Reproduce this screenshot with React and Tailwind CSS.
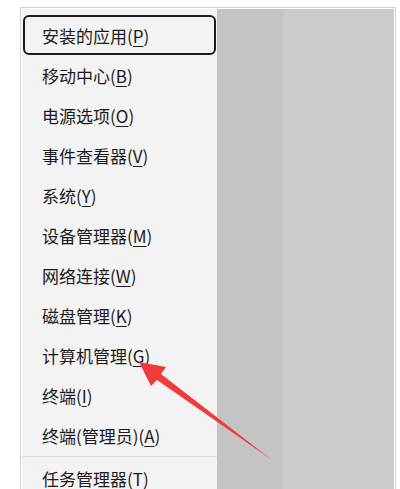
import React from "react";

const items = [
  { label: "安装的应用", key: "P", selected: true },
  { label: "移动中心", key: "B" },
  { label: "电源选项", key: "O" },
  { label: "事件查看器", key: "V" },
  { label: "系统", key: "Y" },
  { label: "设备管理器", key: "M" },
  { label: "网络连接", key: "W" },
  { label: "磁盘管理", key: "K" },
  { label: "计算机管理", key: "G" },
  { label: "终端", key: "I" },
  { label: "终端(管理员)", key: "A" },
];

const MenuItem = ({ label, hotkey, selected }) => (
  <div
    className={`mx-[1px] h-[40px] flex items-center pl-[17px] border-2 rounded-[6px] ${
      selected ? "border-[#1c1c1c]" : "border-transparent"
    }`}
  >
    <span className="text-[17px] text-[#1b1b1b] leading-none">
      {label}(<span className="underline underline-offset-[3px] decoration-1">{hotkey}</span>)
    </span>
  </div>
);

const App = () => {
  return (
    <div
      className="relative w-[400px] h-[489px] overflow-hidden bg-white pt-[7px] pl-[20px]"
      style={{ fontFamily: '"Noto Sans CJK SC", "Noto Sans", sans-serif' }}
    >
      <div className="w-[376px] h-[500px] border border-[#d2d2d2] p-[1px] bg-white">
        <div className="flex h-full">
          {/* context menu */}
          <div className="w-[195px] bg-[#f3f3f3] pt-[6px]">
            {items.map((it) => (
              <MenuItem key={it.key} label={it.label} hotkey={it.key} selected={it.selected} />
            ))}
            <div className="h-[1px] bg-[#dedede] my-[1px]" />
            <MenuItem label="任务管理器" hotkey="T" />
          </div>
          <div className="w-[66px] bg-[#c4c4c4]" />
          <div className="flex-1 bg-[#cbcbcb]" />
        </div>
      </div>

      {/* red annotation arrow */}
      <svg className="absolute left-0 top-0" width="400" height="489" viewBox="0 0 400 489">
        <polygon
          points="139,362 166,367 161,374 272,460 157,380 151,386"
          fill="#ef3b3b"
        />
      </svg>
    </div>
  );
};

export default App;
